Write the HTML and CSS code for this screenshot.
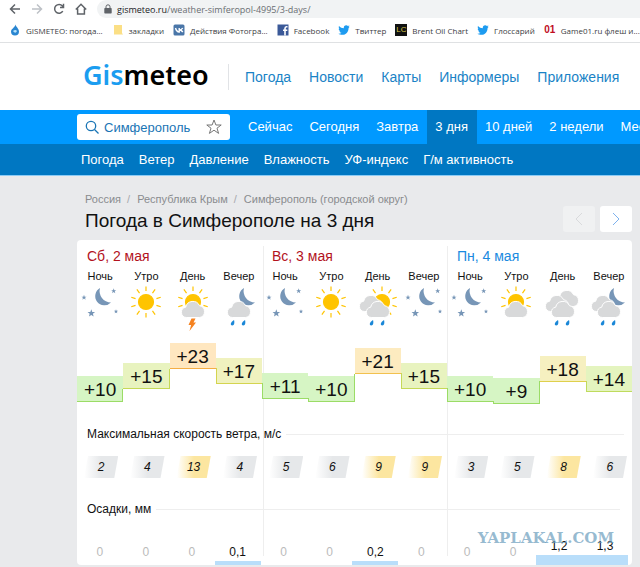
FILE: index.html
```html
<!DOCTYPE html>
<html lang="ru">
<head>
<meta charset="UTF-8">
<title>Погода в Симферополе на 3 дня</title>
<link rel="stylesheet" href="styles.css">
</head>
<body>

<svg class="sprite" width="0" height="0">
    <defs>
        <path id="star" d="M0-4.4 1.1-1.4 4.2-1.4 1.8.6 2.6 3.6 0 1.8-2.6 3.6-1.8.6-4.2-1.4-1.1-1.4z"/>
        <path id="moon" d="M23 3a9.200 9.200 0 1 0 11 14.500a11.500 11.500 0 0 1-11-14.500z"/>
        <path id="cloud" d="M16.300 32.500a5.200 5.200 0 0 1-.6-10.300 7.300 7.300 0 0 1 13.800-1.500 6 6 0 0 1 .2 11.800z"/>
        <path id="drop" d="M2 0c.8 3 .2 5.400-1.700 5.400-2.400 0-2-3 1.700-5.400z"/>
        <g id="sun">
            <circle r="7.500"/>
            <g id="rays">
                <path id="ray" d="M0-11v-4.500"/>
                <use href="#ray" transform="rotate(36)"/>
                <use href="#ray" transform="rotate(72)"/>
                <use href="#ray" transform="rotate(108)"/>
                <use href="#ray" transform="rotate(144)"/>
                <use href="#ray" transform="rotate(180)"/>
                <use href="#ray" transform="rotate(216)"/>
                <use href="#ray" transform="rotate(252)"/>
                <use href="#ray" transform="rotate(288)"/>
                <use href="#ray" transform="rotate(324)"/>
            </g>
        </g>
        <symbol id="w-night" viewBox="0 0 46 48">
            <use href="#moon" class="c-moon"/>
            <use href="#star" class="c-moon" transform="translate(7 12.500) scale(.6)"/>
            <use href="#star" class="c-moon" transform="translate(36.700 6) scale(.6)"/>
            <use href="#star" class="c-moon" transform="translate(14.300 28.300) scale(.9)"/>
            <use href="#star" class="c-moon" transform="translate(39 26.500) scale(.5)"/>
        </symbol>
        <symbol id="w-sun" viewBox="0 0 46 48">
            <use href="#sun" class="c-sun" x="23" y="17"/>
        </symbol>
        <symbol id="w-sun-cloud" viewBox="0 0 46 48">
            <use href="#sun" class="c-sun" x="23" y="17"/>
            <use href="#cloud" class="c-cloud"/>
        </symbol>
        <symbol id="w-storm" viewBox="0 0 46 48">
            <use href="#w-sun-cloud" width="46" height="48"/>
            <path class="c-bolt" d="M21.500 33.500h4l-2 4h2.500l-6.500 8.500 1.600-6h-2.600z"/>
        </symbol>
        <symbol id="w-moon-rain" viewBox="0 0 46 48">
            <use href="#moon" class="c-moon" x="5"/>
            <use href="#cloud" class="c-cloud"/>
            <use href="#drop" class="c-drop" x="16" y="35"/>
            <use href="#drop" class="c-drop" x="27" y="35"/>
        </symbol>
        <symbol id="w-sun-rain" viewBox="0 0 46 48">
            <use href="#sun" class="c-sun" x="27" y="17"/>
            <use href="#cloud" class="c-cloud" x="-7" y="-6"/>
            <use href="#cloud" class="c-cloud"/>
            <use href="#drop" class="c-drop" x="16" y="35"/>
            <use href="#drop" class="c-drop" x="27" y="35"/>
        </symbol>
        <symbol id="w-rain" viewBox="0 0 46 48">
            <use href="#cloud" class="c-cloud" x="4" y="-11"/>
            <use href="#cloud" class="c-cloud" x="-6" y="-6"/>
            <use href="#cloud" class="c-cloud"/>
            <use href="#drop" class="c-drop" x="16" y="35"/>
            <use href="#drop" class="c-drop" x="27" y="35"/>
        </symbol>
        <symbol id="w-moon-clouds-rain" viewBox="0 0 46 48">
            <use href="#moon" class="c-moon" x="5"/>
            <use href="#cloud" class="c-cloud" x="-6" y="-6"/>
            <use href="#cloud" class="c-cloud"/>
            <use href="#drop" class="c-drop" x="16" y="35"/>
            <use href="#drop" class="c-drop" x="27" y="35"/>
        </symbol>
        <symbol id="bird" viewBox="0 0 12 12">
            <path fill="#1d9bf0" d="M1 2c1.400 1.500 3 2.200 4.800 2.300C5.500 2.500 6.800 1.300 8.200 1.300c.7 0 1.300.3 1.700.8l1.600-.6-1 1.400 1.200-.2-1.100 1.200C10.500 8 7.900 10.800 4.300 10.800 2.900 10.800 1.400 10.400.4 9.700c1.200.1 2.300-.2 3.200-.9-1.100-.1-1.800-.7-2.200-1.600h1C1.300 6.800.7 6 .7 4.800l1 .3C.7 4.300.5 3 1 2z"/>
        </symbol>
    </defs>
</svg>

<div class="toolbar">
    <button class="tool" type="button" aria-label="Назад"><svg width="12" height="12" viewBox="0 0 12 12"><path d="M11 6H2M6 1.500 1.500 6 6 10.500"/></svg></button>
    <button class="tool off" type="button" aria-label="Вперёд"><svg width="12" height="12" viewBox="0 0 12 12"><path d="M1 6h9M6 1.500 10.500 6 6 10.500"/></svg></button>
    <button class="tool" type="button" aria-label="Обновить"><svg width="12" height="12" viewBox="0 0 12 12"><path d="M9.800 8.200A4.400 4.400 0 1 1 9.400 3L10.500 4.200M10.500.8v3.700H7"/></svg></button>
    <button class="tool" type="button" aria-label="Домой"><svg width="12" height="12" viewBox="0 0 12 12"><path d="M.8 6.500 6 1.200l5.200 5.300M2.600 5.500v5.500h6.800V5.500"/></svg></button>
    <div class="address">
        <svg width="8" height="10" viewBox="0 0 8 10"><path fill="#5f6368" d="M1 4h6q.7 0 .7.700v4q0 .7-.7.700H1q-.7 0-.7-.7v-4Q.3 4 1 4z"/><path fill="none" stroke="#5f6368" d="M2 4V2.800a2 2 0 0 1 4 0V4"/></svg>
        <span><b>gismeteo.ru</b>/weather-simferopol-4995/3-days/</span>
    </div>
</div>

<nav class="bookmarks">
    <a href="#"><svg width="12" height="12" viewBox="0 0 12 12"><path fill="#2a86d1" d="M6.500.5C7 3 10 4.500 10 7.500a4 4 0 0 1-8 0C2 5 5.500 4 6.500.5z"/><path fill="#b9e4fb" d="M4 7q2.500-2 4 0-1.500 3.500-4 0z"/></svg>GISMETEO: погода...</a>
    <a href="#"><svg width="12" height="12" viewBox="0 0 12 12"><path fill="#fbdf85" d="M2 1h8v8l1 1.500H2z"/></svg>закладки</a>
    <a href="#"><svg width="12" height="12" viewBox="0 0 12 12"><rect x=".5" y=".5" width="11" height="11" rx="1.500" fill="#4a76a8"/><path fill="none" stroke="#fff" stroke-width="1.400" d="M2.500 4q1 3.800 3.700 4V4M9.700 4Q8.500 6 6.500 6q2 0 3.300 2"/></svg>Действия Фотогра...</a>
    <a href="#"><svg width="12" height="12" viewBox="0 0 12 12"><path fill="#3b5998" d="M.5.5h11v11H.5z"/><path fill="none" stroke="#fff" stroke-width="1.600" d="M10.500 2.800H9.500Q8 2.800 8 4.500v7M6 6.300h4.300"/></svg>Facebook</a>
    <a href="#"><svg width="12" height="12"><use href="#bird"/></svg>Твиттер</a>
    <a href="#"><span class="lc">LC</span>Brent Oil Chart</a>
    <a href="#"><svg width="12" height="12"><use href="#bird"/></svg>Глоссарий</a>
    <a href="#"><span class="g01">01</span>Game01.ru флеш и...</a>
</nav>

<header class="header">
    <a href="#" class="logo"><span>Gis</span>meteo</a>
    <nav class="main-nav">
        <a href="#">Погода</a>
        <a href="#">Новости</a>
        <a href="#">Карты</a>
        <a href="#">Информеры</a>
        <a href="#">Приложения</a>
    </nav>
</header>

<div class="bar">
    <div class="search">
        <svg width="14" height="14" viewBox="0 0 14 14"><circle cx="6" cy="6" r="4.700"/><path d="M9.500 9.500l4 4"/></svg>
        <input type="text" value="Симферополь" aria-label="Город">
        <button type="button" aria-label="В избранное"><svg width="16" height="16" viewBox="0 0 16 16"><path d="M8 1l1.900 5h5.300l-4.200 3.200 1.600 5.200L8 11.200l-4.600 3.200L5 9.200.8 6h5.300z"/></svg></button>
    </div>
    <nav class="days-nav">
        <a href="#">Сейчас</a>
        <a href="#">Сегодня</a>
        <a href="#">Завтра</a>
        <a href="#" class="active">3 дня</a>
        <a href="#">10 дней</a>
        <a href="#">2 недели</a>
        <a href="#">Месяц</a>
    </nav>
</div>
<nav class="subbar">
    <a href="#">Погода</a>
    <a href="#">Ветер</a>
    <a href="#">Давление</a>
    <a href="#">Влажность</a>
    <a href="#">УФ-индекс</a>
    <a href="#">Г/м активность</a>
</nav>

<main class="content">
    <div class="crumbs">
        <a href="#">Россия</a><i>/</i><a href="#">Республика Крым</a><i>/</i><a href="#">Симферополь (городской округ)</a>
    </div>
    <div class="title-row">
        <h1>Погода в Симферополе на 3 дня</h1>
        <button type="button" class="arrow" disabled aria-label="Предыдущие дни"><svg width="8" height="14" viewBox="0 0 8 14"><path d="M7 1 1 7l6 6"/></svg></button>
        <button type="button" class="arrow" aria-label="Следующие дни"><svg width="8" height="14" viewBox="0 0 8 14"><path d="M1 1l6 6-6 6"/></svg></button>
    </div>

    <div class="card">
        <table class="forecast">
            <thead>
                <tr class="dates">
                    <th colspan="4" class="weekend">Сб, 2 мая</th>
                    <th colspan="4" class="weekend">Вс, 3 мая</th>
                    <th colspan="4">Пн, 4 мая</th>
                </tr>
                <tr class="periods">
                    <th>Ночь</th><th>Утро</th><th>День</th><th>Вечер</th>
                    <th>Ночь</th><th>Утро</th><th>День</th><th>Вечер</th>
                    <th>Ночь</th><th>Утро</th><th>День</th><th>Вечер</th>
                </tr>
            </thead>
            <tbody>
                <tr class="icons">
                    <td><svg><use href="#w-night"/></svg></td>
                    <td><svg><use href="#w-sun"/></svg></td>
                    <td><svg><use href="#w-storm"/></svg></td>
                    <td><svg><use href="#w-moon-rain"/></svg></td>
                    <td><svg><use href="#w-night"/></svg></td>
                    <td><svg><use href="#w-sun"/></svg></td>
                    <td><svg><use href="#w-sun-rain"/></svg></td>
                    <td><svg><use href="#w-night"/></svg></td>
                    <td><svg><use href="#w-night"/></svg></td>
                    <td><svg><use href="#w-sun-cloud"/></svg></td>
                    <td><svg><use href="#w-rain"/></svg></td>
                    <td><svg><use href="#w-moon-clouds-rain"/></svg></td>
                </tr>
                <!-- --top: offset of the step, --rise / --fall: line up to the next / previous step -->
                <tr class="temps">
                    <td><div class="t t10" style="--top:41px; --rise:13px">+10</div></td>
                    <td><div class="t t15" style="--top:28px; --rise:20px">+15</div></td>
                    <td><div class="t t23" style="--top:8px">+23</div></td>
                    <td><div class="t t17" style="--top:23px; --fall:16px">+17</div></td>
                    <td><div class="t t10" style="--top:38px; --fall:16px">+11</div></td>
                    <td><div class="t t10" style="--top:41px; --fall:4px; --rise:28px">+10</div></td>
                    <td><div class="t t21" style="--top:13px">+21</div></td>
                    <td><div class="t t15" style="--top:28px; --fall:16px">+15</div></td>
                    <td><div class="t t10" style="--top:41px; --fall:14px">+10</div></td>
                    <td><div class="t t10" style="--top:43px; --fall:3px; --rise:23px">+9</div></td>
                    <td><div class="t t18" style="--top:21px">+18</div></td>
                    <td><div class="t t14" style="--top:31px; --fall:11px">+14</div></td>
                </tr>
            </tbody>
        </table>

        <table class="wind">
            <caption><span>Максимальная скорость ветра, м/с</span></caption>
            <tr>
                <td><div>2</div></td><td><div>4</div></td><td><div class="strong">13</div></td><td><div>4</div></td>
                <td><div>5</div></td><td><div>6</div></td><td><div class="strong">9</div></td><td><div class="strong">9</div></td>
                <td><div>3</div></td><td><div>5</div></td><td><div class="strong">8</div></td><td><div>6</div></td>
            </tr>
        </table>

        <table class="rain">
            <caption><span>Осадки, мм</span></caption>
            <tr>
                <td>0</td><td>0</td><td>0</td><td class="wet"><div style="--h:4px">0,1</div></td>
                <td>0</td><td>0</td><td class="wet"><div style="--h:4px">0,2</div></td><td>0</td>
                <td>0</td><td>0</td><td class="wet"><div style="--h:10px">1,2</div></td><td class="wet"><div style="--h:10px">1,3</div></td>
            </tr>
        </table>
        <div class="watermark">YAPLAKAL.COM</div>
    </div>
</main>

</body>
</html>
```

FILE: styles.css
```css
* {
    box-sizing: border-box;
}

body {
    margin: 0;
    font-family: "Liberation Sans", Arial, sans-serif;
    background: #e9eaec;
    color: #111;
    overflow-x: hidden;
}

a {
    text-decoration: none;
    color: inherit;
    white-space: nowrap;
}

button {
    border: 0;
    padding: 0;
    background: none;
}

button svg {
    display: block;
}

.sprite {
    position: absolute;
}

/* browser */

.toolbar {
    display: flex;
    align-items: center;
    gap: 10px;
    height: 18px;
    padding-left: 9px;
    background: #fff;
}

.tool svg {
    fill: none;
    stroke: #5f6368;
    stroke-width: 1.5px;
}

.tool.off svg {
    stroke: #bdc1c6;
}

.address {
    flex: 1;
    display: flex;
    align-items: center;
    gap: 5px;
    height: 18px;
    padding-left: 7px;
    border-radius: 9px 0 0 9px;
    background: #f1f3f4;
    font: 9px "Open Sans", sans-serif;
    color: #6a6e72;
}

.address b {
    font-weight: normal;
    color: #202124;
}

.bookmarks {
    display: flex;
    align-items: center;
    gap: 9px;
    height: 25px;
    padding-left: 9px;
    border-bottom: 1px solid #dfe1e3;
    background: #fff;
    font: 8px "Open Sans", sans-serif;
    color: #3c4043;
    overflow: hidden;
}

.bookmarks a {
    display: flex;
    align-items: center;
    gap: 5px;
}

.lc,
.g01 {
    width: 12px;
    height: 12px;
    font: 8px/12px "Liberation Sans", sans-serif;
    text-align: center;
}

.lc {
    background: #111;
    color: #d8c64a;
}

.g01 {
    font-weight: bold;
    font-size: 10px;
    color: #c00d1e;
}

/* header */

.header {
    display: flex;
    align-items: center;
    height: 67px;
    padding-left: 83px;
    background: #fff;
}

.logo {
    width: 145px;
    padding-bottom: 4px;
    font: 600 27px/28px "Noto Sans", sans-serif;
    color: #000;
}

.logo span {
    color: #1b9df0;
}

.main-nav {
    display: flex;
    align-items: center;
    gap: 18px;
    height: 26px;
    padding-left: 16px;
    border-left: 1px solid #e1e3e6;
    font-size: 14px;
    color: #1a83c6;
}

.bar {
    display: flex;
    align-items: center;
    height: 34px;
    padding-left: 77px;
    background: #0099ff;
    overflow: hidden;
}

.search {
    display: flex;
    flex: none;
    align-items: center;
    gap: 5px;
    width: 153px;
    height: 26px;
    padding: 0 8px;
    border-radius: 3px;
    background: #fff;
}

.search svg {
    flex: none;
    fill: none;
    stroke: #1a75b5;
    stroke-width: 1.3px;
}

.search button svg {
    stroke: #777;
    stroke-width: 1px;
}

.search input {
    flex: 1;
    min-width: 0;
    padding: 0;
    border: 0;
    outline: 0;
    font: 13px "Liberation Sans", Arial, sans-serif;
    color: #1a75b5;
}

.days-nav {
    display: flex;
    padding-left: 10px;
    font-size: 13px;
    line-height: 34px;
    color: #fff;
}

.days-nav a {
    padding: 0 9px 0 8px;
}

.days-nav .active {
    background: #0077c2;
}

.subbar {
    display: flex;
    gap: 15px;
    padding-left: 81px;
    border-bottom: 1px solid #8ccbf5;
    background: #0077c2;
    font-size: 13px;
    line-height: 31px;
    color: #fff;
}

/* page */

.content {
    padding: 16px 8px 0 77px;
}

.crumbs {
    padding-left: 8px;
    font-size: 11px;
    line-height: 14px;
    color: #8a8c8f;
}

.crumbs i {
    padding: 0 7px 0 6px;
    font-style: normal;
    color: #a7a9ac;
}

.title-row {
    display: flex;
    align-items: center;
    gap: 5px;
    height: 34px;
    padding-left: 8px;
}

h1 {
    flex: 1;
    margin: 0;
    font-size: 19px;
    font-weight: normal;
    line-height: 24px;
    padding-bottom: 4px;
}

.arrow {
    display: grid;
    place-items: center;
    width: 32px;
    height: 26px;
    border-radius: 3px;
    background: #fff;
    margin-bottom: 8px;
}

.arrow svg {
    fill: none;
    stroke: #7eb2ee;
}

.arrow:disabled {
    background: #f0f1f2;
}

.arrow:disabled svg {
    stroke: #d9dadc;
}

.card {
    position: relative;
    border-radius: 4px;
    background:
        linear-gradient(#eee, #eee) 33.5% 6px / 1px 310px no-repeat,
        linear-gradient(#eee, #eee) 66.8% 6px / 1px 310px no-repeat,
        #fff;
}

table {
    width: 100%;
    table-layout: fixed;
    border-collapse: collapse;
}

th,
td {
    padding: 0;
    font-weight: normal;
    text-align: center;
}

.dates th {
    height: 27px;
    padding: 4px 0 0 10px;
    font-size: 14px;
    text-align: left;
    color: #1a8ae0;
}

.dates .weekend {
    color: #b3121d;
}

.periods th {
    height: 18px;
    font-size: 11px;
}

.icons td {
    height: 50px;
    vertical-align: top;
}

.icons svg {
    display: block;
    width: 46px;
    height: 48px;
    margin: 0 auto;
}

.c-moon { fill: #7796b7; }
.c-sun { fill: #ffc400; stroke: #ffc400; stroke-width: 1.2px; }
.c-cloud { fill: #d8d9da; stroke: #fff; stroke-width: 1px; }
.c-bolt { fill: #f58220; }
.c-drop { fill: #1a87d7; }

.temps td {
    height: 90px;
    vertical-align: top;
}

.t {
    position: relative;
    height: 26px;
    margin-top: var(--top);
    border-bottom: 1px solid var(--line);
    background: var(--fill);
    font-size: 19px;
    line-height: 27px;
}

.t::before,
.t::after {
    content: "";
    position: absolute;
    bottom: -1px;
    width: 1px;
    background: var(--line);
}

.t::before {
    left: 0;
    height: var(--fall, 0);
}

.t::after {
    right: 0;
    height: var(--rise, 0);
}

.t10 { --fill: #d6f5c4; --line: #9bdc66; }
.t14 { --fill: #e4f4bf; --line: #bfdb5e; }
.t15 { --fill: #e8f3bf; --line: #c5d957; }
.t17 { --fill: #f0f2bf; --line: #d4d44f; }
.t18 { --fill: #f6f0c0; --line: #dfd04c; }
.t21 { --fill: #fdebc0; --line: #f2c14e; }
.t23 { --fill: #ffe7c0; --line: #f5ae45; }

caption {
    height: 18px;
    padding: 0 8px 0 10px;
    font-size: 12px;
    line-height: 18px;
    text-align: left;
    white-space: nowrap;
}

caption span {
    display: flex;
    align-items: center;
    gap: 5px;
}

caption span::after {
    content: "";
    flex: 1;
    height: 1px;
    background: #eee;
}

.wind td {
    height: 57px;
    padding: 13px 5px 22px 7px;
}

.wind div {
    height: 22px;
    clip-path: polygon(4px 0, 100% 0, calc(100% - 4px) 100%, 0 100%);
    background: linear-gradient(to right, #fff, #e6e8ea 50%);
    font-size: 12px;
    font-style: italic;
    line-height: 22px;
}

.wind .strong {
    background: linear-gradient(to right, #fff, #fce6a0 50%);
}

.rain {
    width: calc(100% - 4px);
}

.rain td {
    height: 47px;
    padding-top: 27px;
    font-size: 12px;
    vertical-align: top;
    color: #bbb;
}

.rain .wet {
    padding: 0;
    vertical-align: bottom;
    color: #111;
}

.wet div {
    padding-bottom: 2px;
    line-height: 14px;
    border-bottom: var(--h) solid #b9defa;
}

.watermark {
    position: absolute;
    right: 18px;
    bottom: 18px;
    font: bold 15px/18px "DejaVu Serif", serif;
    color: rgba(104, 156, 188, .7);
}
```
